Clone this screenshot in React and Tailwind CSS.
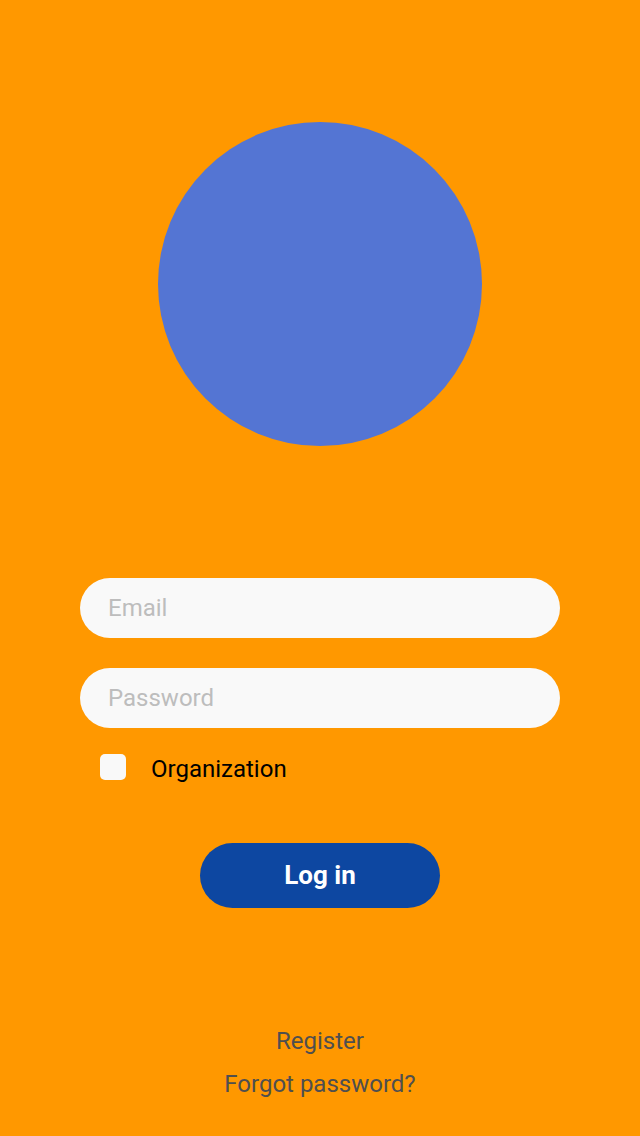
export default function App() {
  return (
    <div className="min-h-[1136px] w-full bg-[#ff9800] flex flex-col items-center font-['Roboto',sans-serif]">
      <div className="mt-[122px] w-[324px] h-[324px] rounded-full bg-[#5475d3]" />

      <div className="mt-[132px] w-[480px] flex flex-col">
        <input
          type="email"
          placeholder="Email"
          className="h-[60px] rounded-full bg-[#f9f9f9] px-[28px] text-[24px] text-black placeholder:text-[#bdbdbd] outline-none"
        />
        <input
          type="password"
          placeholder="Password"
          className="mt-[30px] h-[60px] rounded-full bg-[#f9f9f9] px-[28px] text-[24px] text-black placeholder:text-[#bdbdbd] outline-none"
        />
        <label className="mt-[26px] ml-[20px] flex items-center h-[26px]">
          <span className="w-[26px] h-[26px] rounded-[5px] bg-[#f9f9f9]" />
          <span className="ml-[25px] mt-[4px] text-[24px] text-black leading-none">Organization</span>
        </label>
      </div>

      <button className="mt-[63px] w-[240px] h-[65px] rounded-full bg-[#0d47a1] text-white text-[26px] font-bold">
        Log in
      </button>

      <div className="mt-[118px] flex flex-col items-center text-[24px] text-[#4f4f4f]">
        <a className="leading-[30px]">Register</a>
        <a className="mt-[13px] leading-[30px]">Forgot password?</a>
      </div>
    </div>
  )
}
